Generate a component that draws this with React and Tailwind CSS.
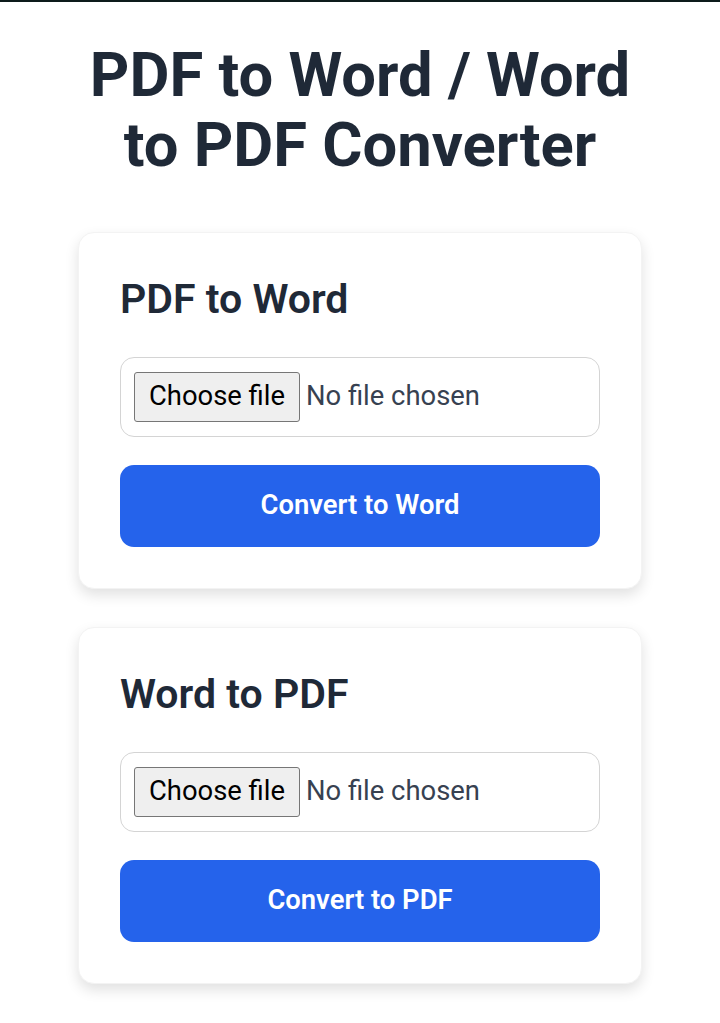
export default function App() {
	const sections = [
		{ title: "PDF to Word", action: "Convert to Word" },
		{ title: "Word to PDF", action: "Convert to PDF" },
	];

	return (
		<div className="min-h-screen bg-white font-['Roboto',sans-serif] text-[#1f2937]">
			<div className="h-[2px] bg-[#0d1b1b]" />
			<div className="px-[78px] pt-[38px] pb-10">
				<h1 className="text-center text-[61.5px] leading-[70px] font-bold">
					PDF to Word / Word to PDF Converter
				</h1>

				<div className="mt-[52px] flex flex-col gap-[38px]">
					{sections.map((s) => (
						<div
							key={s.title}
							className="bg-white rounded-2xl shadow-[0_6px_14px_rgba(0,0,0,0.12)] border border-[#f3f3f3] p-[41px]"
						>
							<h2 className="text-[41px] leading-[50px] font-semibold">
								{s.title}
							</h2>

							{/* fake file input */}
							<div className="mt-[33px] h-[80px] flex items-center gap-[6px] px-[13px] rounded-[14px] border border-[#d4d4d4]">
								<span className="h-[50px] flex items-center px-[14px] bg-[#efefef] border border-[#767676] rounded-[3px] text-[27.4px] text-black">
									Choose file
								</span>
								<span className="text-[27.4px] text-[#374151]">No file chosen</span>
							</div>

							<button className="mt-[28px] w-full h-[82px] rounded-[14px] bg-[#2563eb] text-white text-[27.4px] font-semibold">
								{s.action}
							</button>
						</div>
					))}
				</div>
			</div>
		</div>
	);
}
